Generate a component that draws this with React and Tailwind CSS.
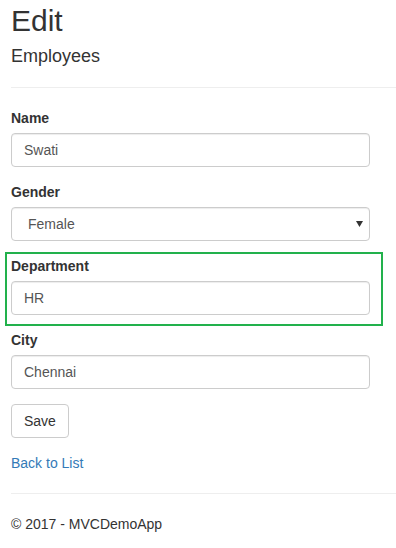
import React, { useState } from "react";

/**
 * EditEmployee
 * Scaffolded-style edit form for an employee record
 */
const inputClass =
  "block w-[359px] h-[34px] px-3 py-[6px] text-[14px] leading-[20px] text-[#555] bg-white border border-[#ccc] rounded-[4px] shadow-[inset_0_1px_1px_rgba(0,0,0,0.075)] outline-none";

const Field = ({ label, children }) => (
  <div className="mb-[15px]">
    <label className="block mb-[5px] font-bold text-[14px] leading-[20px] text-[#333]">{label}</label>
    {children}
  </div>
);

const App = () => {
  const [form, setForm] = useState({
    name: "Swati",
    gender: "Female",
    department: "HR",
    city: "Chennai",
  });

  const update = (key) => (e) => setForm({ ...form, [key]: e.target.value });

  return (
    <div className="min-h-screen bg-white pl-[11px] font-['Liberation_Sans',Arial,sans-serif] text-[14px] leading-[20px] text-[#333]">
      <h2 className="mt-[4px] mb-[10px] text-[30px] leading-[33px] font-normal">Edit</h2>

      <form onSubmit={(e) => e.preventDefault()}>
        <h4 className="mt-[10px] mb-[10px] text-[18px] leading-[19.8px] font-normal">Employees</h4>
        <hr className="mt-[20px] mb-[20px] border-0 border-t border-[#eee]" />

        <Field label="Name">
          <input className={inputClass} value={form.name} onChange={update("name")} />
        </Field>

        <Field label="Gender">
          <div className="relative w-[359px]">
            <select
              className={`${inputClass} appearance-none pl-[16px]`}
              value={form.gender}
              onChange={update("gender")}
            >
              <option>Male</option>
              <option>Female</option>
            </select>
            <svg
              className="absolute right-[7px] top-[14px] pointer-events-none"
              width="7"
              height="6"
              viewBox="0 0 7 6"
            >
              <path d="M0 0 H7 L3.5 6 Z" fill="#333" />
            </svg>
          </div>
        </Field>

        {/* Highlighted field */}
        <div className="relative">
          <div className="absolute left-[-6px] top-[-4px] w-[378px] h-[74px] border-2 border-[#22b14c] pointer-events-none" />
          <Field label="Department">
            <input className={inputClass} value={form.department} onChange={update("department")} />
          </Field>
        </div>

        <Field label="City">
          <input className={inputClass} value={form.city} onChange={update("city")} />
        </Field>

        <div className="mb-[15px]">
          <button
            type="submit"
            className="h-[34px] px-3 py-[6px] text-[14px] leading-[20px] text-[#333] bg-white border border-[#ccc] rounded-[4px]"
          >
            Save
          </button>
        </div>
      </form>

      <div>
        <a href="#" className="text-[#337ab7] no-underline">
          Back to List
        </a>
      </div>

      <hr className="mt-[20px] mb-[20px] border-0 border-t border-[#eee]" />
      <footer>
        <p className="mb-[10px]">© 2017 - MVCDemoApp</p>
      </footer>
    </div>
  );
};

export default App;
